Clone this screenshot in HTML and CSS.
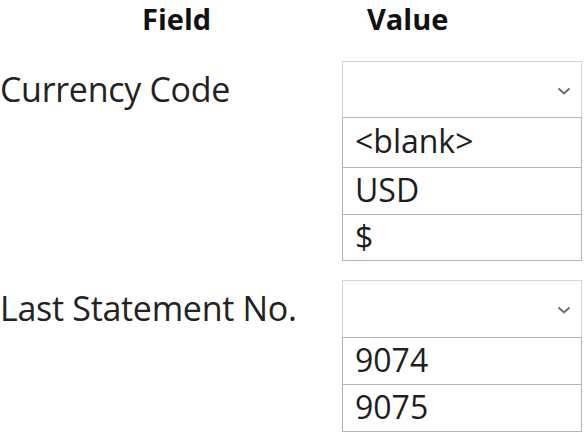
FILE: index.html
```html
<!DOCTYPE html>
<html>
<head>
<meta charset="utf-8">
<link rel="stylesheet" href="styles.css">
</head>
<body>
<div class="page">
  <div class="header">
    <div class="h-field">Field</div>
    <div class="h-value">Value</div>
  </div>
  <div class="group">
    <div class="label">Currency Code</div>
    <div class="control">
      <div class="dropdown">
        <svg class="chev" width="14" height="8" viewBox="0 0 14 8"><path d="M1.5 1.5 L7 6.5 L12.5 1.5" fill="none" stroke="#6e6e6e" stroke-width="2"/></svg>
      </div>
      <div class="option option-tall">&lt;blank&gt;</div>
      <div class="option">USD</div>
      <div class="option option-last">$</div>
    </div>
  </div>
  <div class="group group-second">
    <div class="label">Last Statement No.</div>
    <div class="control">
      <div class="dropdown dropdown-2">
        <svg class="chev" width="14" height="8" viewBox="0 0 14 8"><path d="M1.5 1.5 L7 6.5 L12.5 1.5" fill="none" stroke="#6e6e6e" stroke-width="2"/></svg>
      </div>
      <div class="option">9074</div>
      <div class="option">9075</div>
    </div>
  </div>
</div>
</body>
</html>
```

FILE: styles.css
```css
html, body {
  margin: 0;
  padding: 0;
  background: #ffffff;
}
body {
  font-family: "Open Sans", "Noto Sans", sans-serif;
  color: #1e1e1e;
  width: 584px;
  height: 434px;
  overflow: hidden;
}
.page {
  display: flex;
  flex-direction: column;
}
.header {
  display: flex;
  height: 61px;
  font-weight: 700;
  font-size: 29px;
  line-height: 38px;
  color: #111;
}
.h-field {
  padding-left: 142px;
  width: 367px;
  box-sizing: border-box;
}
.group {
  display: flex;
}
.group-second {
  margin-top: 19px;
}
.label {
  width: 342px;
  font-size: 34px;
  line-height: 57px;
  color: #222;
  letter-spacing: -0.3px;
  white-space: nowrap;
}
.control {
  width: 240px;
  display: flex;
  flex-direction: column;
}
.dropdown {
  height: 57px;
  border: 1px solid #d4d4d4;
  border-bottom: 1px solid #b4b4b4;
  box-sizing: border-box;
  display: flex;
  align-items: center;
  justify-content: flex-end;
  padding-right: 10px;
}
.dropdown-2 {
  height: 58px;
}
.chev {
  display: block;
  margin-top: 2px;
}
.option {
  border: 1px solid #b4b4b4;
  border-top: none;
  box-sizing: border-box;
  height: 47px;
  padding-left: 12px;
  font-size: 32px;
  line-height: 44px;
  color: #1e1e1e;
}
.option-tall {
  height: 50px;
  line-height: 46px;
}
.option-last {
  height: 46px;
}
```
